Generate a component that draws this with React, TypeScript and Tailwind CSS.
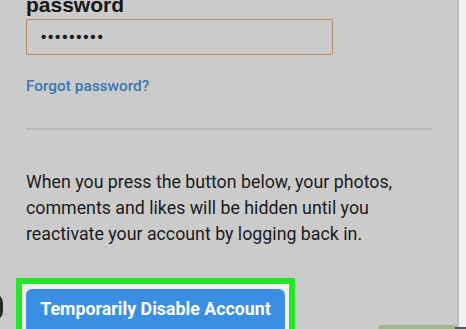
export default function App() {
  return (
    <div className="relative h-[329px] w-[466px] overflow-hidden bg-[#cbcbcb]">
      <div className="flex h-full">
        <div className="flex w-[457px] flex-col pl-[26px] pr-[25px]">
          <div className="mt-[-7px] font-['Liberation_Sans',sans-serif] text-[21px] font-bold leading-[24px] text-[#161616]">
            password
          </div>
          <div className="mt-[2px] flex h-[44px] w-[307px] items-center rounded-[2px] border-[1.5px] border-[#b98a62] pl-[14px]">
            <span className="font-['Liberation_Sans',sans-serif] text-[15px] font-bold tracking-[1.8px] text-[#1a1a1a]">
              •••••••••
            </span>
          </div>
          <div className="mt-[21px] font-['Roboto',sans-serif] text-[15.4px] font-medium leading-[20px] text-[#3b77b2]">
            Forgot password?
          </div>
          <div className="mt-[32px] h-[2px] w-full bg-[#b9b9b9]" />
          <p className="mt-[39px] whitespace-nowrap font-['Roboto',sans-serif] text-[17.8px] leading-[26px] text-[#1b1b1b]">
            When you press the button below, your photos,
            <br />
            comments and likes will be hidden until you
            <br />
            reactivate your account by logging back in.
          </p>
          <div className="ml-[-10px] mt-[31px] w-[279px] border-[6px] border-b-0 border-[#25e628] bg-[#eef0f2] px-[4px] pt-[5px]">
            <button className="flex h-[40px] w-full items-center justify-center rounded-t-[6px] bg-[#3b8fe3] font-['Roboto',sans-serif] text-[17.8px] font-bold text-white">
              Temporarily Disable Account
            </button>
          </div>
        </div>
        <div className="w-[2px] bg-[#bdbdbd]" />
        <div className="flex-1 bg-[#f0f1f4]" />
      </div>
      <div className="absolute left-[-14px] top-[294px] h-[26px] w-[17px] rounded-full bg-[#2a2a2a]" />
      <div className="absolute left-[378px] top-[325px] h-[6px] w-[79px] rounded-tl-[4px] bg-[#a3b690]" />
      <div className="absolute left-[455px] top-[327px] h-[4px] w-[11px] bg-[#555555]" />
    </div>
  );
}
